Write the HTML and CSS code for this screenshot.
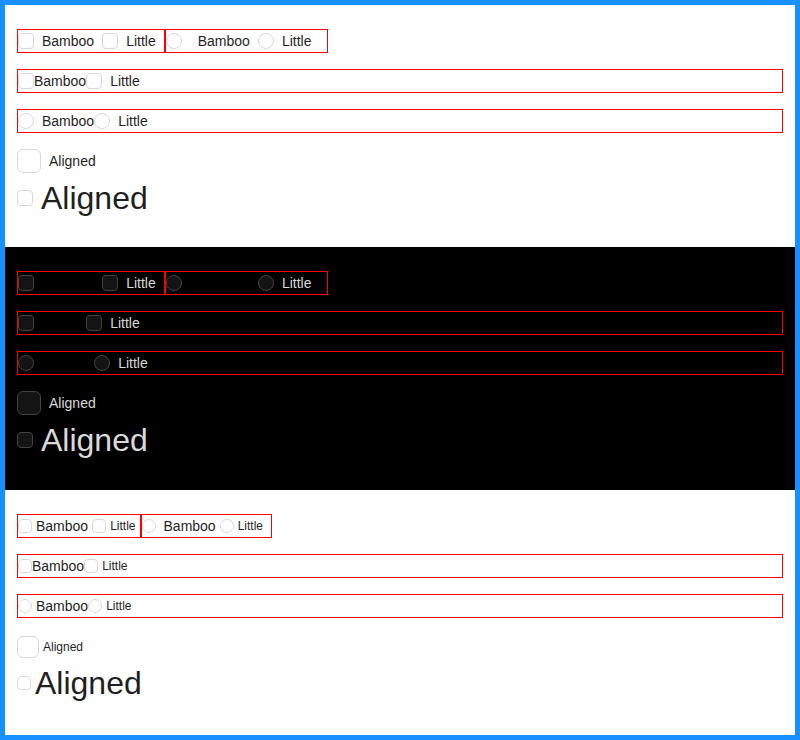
FILE: index.html
```html
<!DOCTYPE html>
<html>
<head>
<meta charset="utf-8">
<link rel="stylesheet" href="styles.css">
</head>
<body>
<div class="frame">
  <section class="sec light">
    <div class="line inline">
      <div class="box">
        <span class="cb"></span><span class="t ml8 bam">Bamboo</span><span class="cb ml8"></span><span class="t ml8 mr8">Little</span>
      </div>
      <div class="box">
        <span class="rd"></span><span class="t ml16 bam">Bamboo</span><span class="rd ml8"></span><span class="t ml8 mr16">Little</span>
      </div>
    </div>
    <div class="line box gap16">
      <span class="cb"></span><span class="t bam">Bamboo</span><span class="cb"></span><span class="t ml8">Little</span>
    </div>
    <div class="line box gap16">
      <span class="rd"></span><span class="t ml8 bam">Bamboo</span><span class="rd"></span><span class="t ml8">Little</span>
    </div>
    <div class="line aligned gap16">
      <span class="cb big"></span><span class="t ml8">Aligned</span>
    </div>
    <div class="line huge">
      <span class="cb"></span><span class="t ml8 hugetext">Aligned</span>
    </div>
  </section>

  <section class="sec dark">
    <div class="line inline">
      <div class="box">
        <span class="cb"></span><span class="t ml8 bam">Bamboo</span><span class="cb ml8"></span><span class="t ml8 mr8">Little</span>
      </div>
      <div class="box">
        <span class="rd"></span><span class="t ml16 bam">Bamboo</span><span class="rd ml8"></span><span class="t ml8 mr16">Little</span>
      </div>
    </div>
    <div class="line box gap16">
      <span class="cb"></span><span class="t bam">Bamboo</span><span class="cb"></span><span class="t ml8">Little</span>
    </div>
    <div class="line box gap16">
      <span class="rd"></span><span class="t ml8 bam">Bamboo</span><span class="rd"></span><span class="t ml8">Little</span>
    </div>
    <div class="line aligned gap16">
      <span class="cb big"></span><span class="t ml8">Aligned</span>
    </div>
    <div class="line huge">
      <span class="cb"></span><span class="t ml8 hugetext">Aligned</span>
    </div>
  </section>

  <section class="sec small">
    <div class="line inline">
      <div class="box">
        <span class="cb"></span><span class="t ml4 bam">Bamboo</span><span class="cb ml4"></span><span class="t ml4 mr4 sm">Little</span>
      </div>
      <div class="box">
        <span class="rd"></span><span class="t ml8 bam">Bamboo</span><span class="rd ml4"></span><span class="t ml4 mr8 sm">Little</span>
      </div>
    </div>
    <div class="line box gap16">
      <span class="cb"></span><span class="t bam">Bamboo</span><span class="cb"></span><span class="t ml4 sm">Little</span>
    </div>
    <div class="line box gap16">
      <span class="rd"></span><span class="t ml4 bam">Bamboo</span><span class="rd"></span><span class="t ml4 sm">Little</span>
    </div>
    <div class="line aligned gap16">
      <span class="cb big"></span><span class="t ml4 sm">Aligned</span>
    </div>
    <div class="line huge">
      <span class="cb"></span><span class="t ml4 hugetext">Aligned</span>
    </div>
  </section>
</div>
</body>
</html>
```
FILE: styles.css
```css
html, body {
  margin: 0;
  padding: 0;
}
body {
  font-family: "Liberation Sans", Arial, sans-serif;
  font-size: 14px;
  line-height: 22px;
}
.frame {
  box-sizing: border-box;
  width: 800px;
  height: 740px;
  border: 5px solid #1890ff;
  display: flex;
  flex-direction: column;
  overflow: hidden;
}
.sec {
  padding: 24px 12px;
  display: flex;
  flex-direction: column;
}
.light { background: #ffffff; color: #1f1f1f; }
.dark { background: #000000; color: #d9d9d9; padding-bottom: 25px; }
.small { background: #ffffff; color: #1f1f1f; flex: 1; padding-bottom: 0; }

.line {
  display: flex;
  align-items: center;
}
.inline { align-self: flex-start; }
.gap16 { margin-top: 16px; }

.box {
  box-sizing: border-box;
  height: 24px;
  border: 1px solid #ff0000;
  display: flex;
  align-items: center;
}

.cb, .rd {
  box-sizing: border-box;
  flex: none;
  width: 16px;
  height: 16px;
  border: 1px solid #d9d9d9;
  background: #ffffff;
}
.cb { border-radius: 4px; }
.rd { border-radius: 50%; }
.cb.big { width: 24px; height: 24px; border-radius: 6px; }

.dark .cb, .dark .rd { background: #141414; border-color: #424242; }
.dark .bam { color: #000000; }

.small .cb, .small .rd { width: 14px; height: 14px; }
.small .cb.big { width: 22px; height: 22px; border-radius: 6px; }
.small .aligned { height: 26px; }
.small .huge { height: 46px; }
.sm { font-size: 12px; }

.t { white-space: nowrap; }
.ml4 { margin-left: 4px; }
.ml8 { margin-left: 8px; }
.ml16 { margin-left: 16px; }
.mr4 { margin-right: 4px; }
.mr8 { margin-right: 8px; }
.mr16 { margin-right: 16px; }

.aligned { height: 24px; }
.huge { height: 50px; }
.hugetext { font-size: 32px; line-height: 50px; }
.small .hugetext { line-height: 46px; }
```
